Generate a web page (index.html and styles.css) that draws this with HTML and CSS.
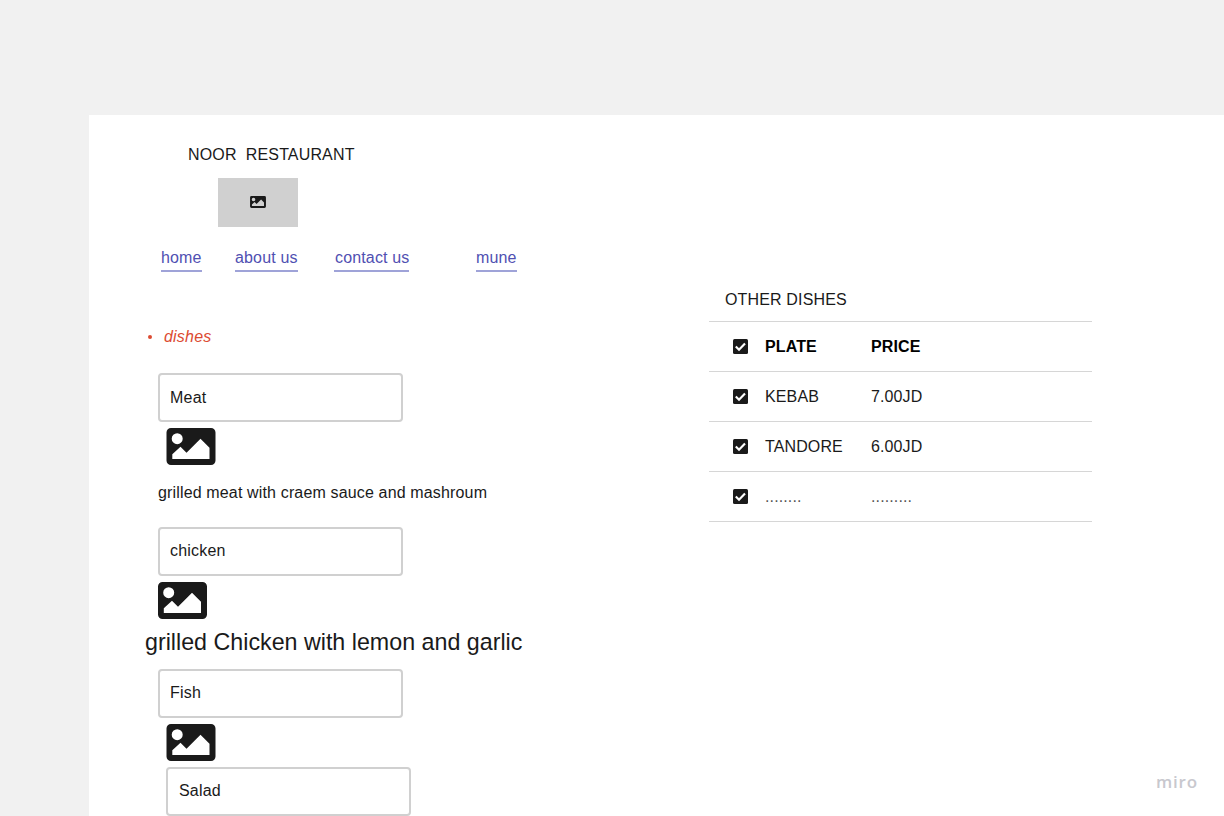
FILE: index.html
```html
<!DOCTYPE html>
<html lang="en">
<head>
<meta charset="utf-8">
<title>Noor Restaurant</title>
<link rel="stylesheet" href="styles.css">
</head>
<body>
<svg class="defs" width="0" height="0">
  <symbol id="picture" viewBox="0 0 49 37">
    <path fill="currentColor" fill-rule="evenodd" d="M4.500 0h40A4.500 4.500 0 0 1 49 4.500v28A4.500 4.500 0 0 1 44.500 37h-40A4.500 4.500 0 0 1 0 32.500v-28A4.500 4.500 0 0 1 4.500 0zM10.700 5.200a5.500 5.500 0 1 0 0 11a5.500 5.500 0 1 0 0-11zM5.800 26.200v4.800h37.200V19.700l-9-9L20 24.700l-6-6z"/>
  </symbol>
  <symbol id="check" viewBox="0 0 15 15">
    <rect width="15" height="15" rx="1.500" fill="#1a1a1a"/>
    <path d="M2.800 7.500l3.200 3.200l6-6.200" fill="none" stroke="#fff" stroke-width="2.200"/>
  </symbol>
</svg>
<main class="board">
  <section class="left">
    <h1 class="title">NOOR&nbsp; RESTAURANT</h1>
    <div class="thumb"><svg class="thumb-icon"><use href="#picture"/></svg></div>
    <nav class="nav">
      <a class="link home">home</a>
      <a class="link about">about us</a>
      <a class="link contact">contact us</a>
      <a class="link menu">mune</a>
    </nav>
    <div class="dishes"><span class="bullet"></span><em>dishes</em></div>
    <div class="field meat">Meat</div>
    <svg class="picture inset"><use href="#picture"/></svg>
    <p class="desc">grilled meat with craem sauce and mashroum</p>
    <div class="field">chicken</div>
    <svg class="picture"><use href="#picture"/></svg>
    <p class="desc-large">grilled Chicken with lemon and garlic</p>
    <div class="field">Fish</div>
    <svg class="picture inset"><use href="#picture"/></svg>
    <div class="field salad">Salad</div>
  </section>
  <section class="right">
    <h2 class="table-title">OTHER DISHES</h2>
    <div class="row head"><svg class="check"><use href="#check"/></svg><span class="plate">PLATE</span><span class="price">PRICE</span></div>
    <div class="row"><svg class="check"><use href="#check"/></svg><span class="plate">KEBAB</span><span class="price">7.00JD</span></div>
    <div class="row"><svg class="check"><use href="#check"/></svg><span class="plate">TANDORE</span><span class="price">6.00JD</span></div>
    <div class="row"><svg class="check"><use href="#check"/></svg><span class="plate dots">........</span><span class="price dots">.........</span></div>
    <div class="brand">miro</div>
  </section>
</main>
</body>
</html>
```
FILE: styles.css
```css
* { box-sizing: border-box; }
body {
  margin: 0;
  height: 816px;
  overflow: hidden;
  padding: 115px 0 0 89px;
  background: #f1f1f1;
  color: #1a1a1a;
  font: 16px/20px "Liberation Sans", Arial, sans-serif;
}
.defs { display: none; }
.board {
  display: flex;
  height: 701px;
  background: #fff;
}
.left {
  display: flex;
  flex-direction: column;
  align-items: flex-start;
  flex: none;
  width: 620px;
  padding: 30px 0 0 69px;
}
.title {
  margin: 0 0 13px 30px;
  font-size: 16px;
  font-weight: 400;
  letter-spacing: 0.15px;
}
.thumb {
  display: flex;
  align-items: center;
  justify-content: center;
  width: 80px;
  height: 49px;
  margin-left: 60px;
  background: #d0d0d0;
}
.thumb-icon { width: 16px; height: 12px; margin-bottom: 1px; }
.nav {
  display: flex;
  margin: 21px 0 0 3px;
}
.link {
  height: 24px;
  border-bottom: 2px solid #9fa3d8;
  color: #5050b2;
  white-space: nowrap;
  letter-spacing: 0.15px;
}
.home { width: 41px; margin-right: 33px; }
.about { width: 63px; margin-right: 36px; }
.contact { width: 75px; margin-right: 67px; padding-left: 1px; }
.menu { width: 41px; }
.dishes {
  display: flex;
  align-items: center;
  margin: 55px 0 26px -10px;
  color: #dc4b32;
  letter-spacing: 0.2px;
}
.bullet {
  width: 4px;
  height: 4px;
  margin: 0 12px 0 0;
  border-radius: 50%;
  background: #dc4b32;
}
.field {
  width: 245px;
  height: 49px;
  padding: 12px 10px;
  border: 2px solid #d0d0d0;
  border-radius: 4px;
  letter-spacing: 0.2px;
}
.meat { padding-top: 13px; }
.picture {
  width: 49px;
  height: 37px;
  margin-top: 6px;
}
.inset { width: 50px; margin-left: 8px; }
.desc {
  margin: 18px 0 24px;
  letter-spacing: 0.15px;
}
.desc-large {
  margin: 9px 0 13px -13px;
  font-size: 23.25px;
  line-height: 28px;
}
.salad {
  margin: 6px 0 0 8px;
  padding-left: 11px;
}
.right {
  display: flex;
  flex-direction: column;
  flex: none;
  width: 515px;
  padding-top: 175px;
}
.table-title {
  margin: 0 0 11px 16px;
  font-size: 16px;
  font-weight: 400;
  letter-spacing: 0.15px;
}
.row {
  display: flex;
  align-items: center;
  width: 383px;
  height: 50px;
  padding-left: 24px;
  border-top: 1px solid #d6d6d6;
  letter-spacing: 0.12px;
}
.row:nth-of-type(4) { height: 51px; border-bottom: 1px solid #d6d6d6; }
.head { color: #000; font-weight: 700; }
.check { width: 15px; height: 15px; margin-right: 17px; }
.plate { width: 106px; }
.dots { color: #555; }
.brand {
  margin: 248px 0 0 447px;
  color: #c8c8ce;
  font: 600 17px/24px "Open Sans", "Noto Sans", sans-serif;
  letter-spacing: 0.8px;
}
```
